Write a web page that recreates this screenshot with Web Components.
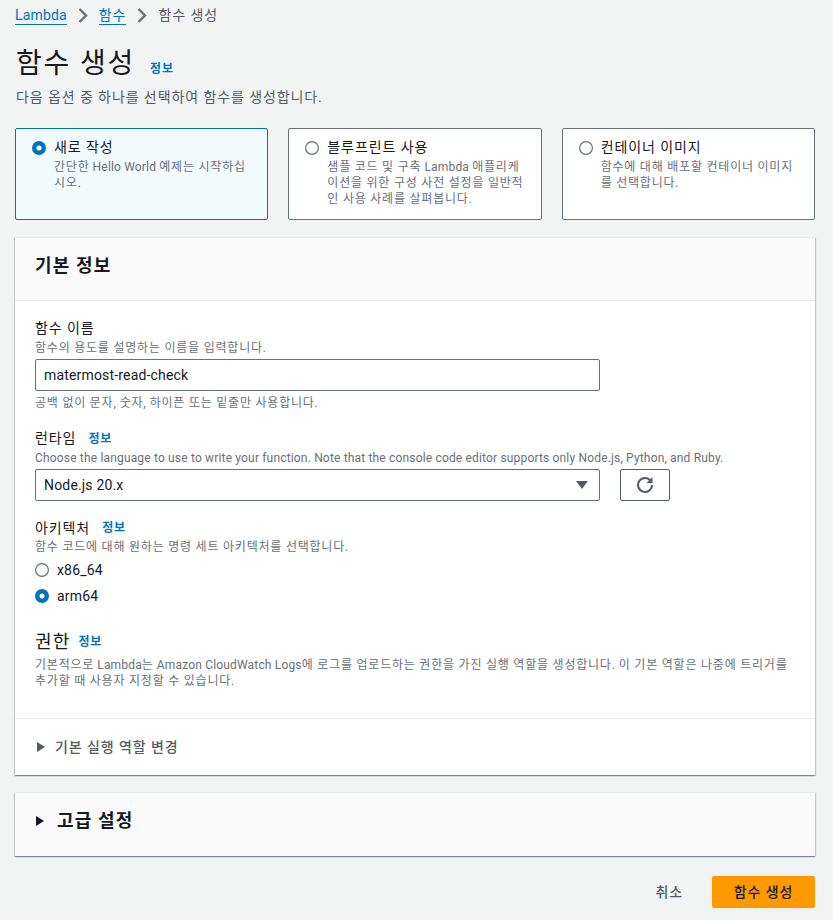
<!DOCTYPE html>
<html lang="ko"><head><meta charset="utf-8"><title>함수 생성</title>
<style>
html,body{margin:0;padding:0;background:#f2f3f3}
body{font:14px/20px Roboto,"Noto Sans CJK KR",sans-serif;color:#16191f;width:833px;height:920px;overflow:hidden;letter-spacing:.17px}
</style></head><body>
<lambda-page></lambda-page>
<script>
const FONT='Roboto,"Noto Sans CJK KR",sans-serif';
const HANGUL=/[\u3131-\uD7A3]+(?: +[\u3131-\uD7A3]+)*[.,]?/g;
function spaceHangul(root){
  const w=document.createTreeWalker(root,NodeFilter.SHOW_TEXT),nodes=[];
  while(w.nextNode()){const n=w.currentNode;if(n.parentNode.nodeName!=='STYLE'&&/[\u3131-\uD7A3]/.test(n.data))nodes.push(n);}
  for(const n of nodes){
    const f=document.createDocumentFragment();let i=0;
    for(const m of n.data.matchAll(HANGUL)){
      if(m.index>i)f.append(n.data.slice(i,m.index));
      const s=document.createElement('span');s.style.letterSpacing='.065em';s.textContent=m[0];f.append(s);
      i=m.index+m[0].length;
    }
    if(i<n.data.length)f.append(n.data.slice(i));
    n.replaceWith(f);
  }
}
function def(name,html){
  customElements.define(name,class extends HTMLElement{
    connectedCallback(){
      if(this.shadowRoot)return;
      const r=this.attachShadow({mode:'open'});
      r.innerHTML=typeof html==='function'?html(this):html;
      spaceHangul(r);
    }
  });
}
const CHEV='<svg width="10" height="15" viewBox="0 0 10 15"><path d="M1.5 1l6.5 6.5-6.5 6.5" fill="none" stroke="#687078" stroke-width="2.4"/></svg>';
def('info-link',`<style>:host{display:inline-block;font-size:12px;line-height:16px;font-weight:700;color:#0073bb}</style>정보`);
def('radio-dot',h=>`<style>:host{display:inline-block;width:14px;height:14px;flex:none}svg{display:block}</style>
<svg width="14" height="14" viewBox="0 0 14 14">${h.hasAttribute('checked')
?'<circle cx="7" cy="7" r="4.75" fill="#fff" stroke="#0073bb" stroke-width="4.5"/>'
:'<circle cx="7" cy="7" r="6.4" fill="#fff" stroke="#687078" stroke-width="1.2"/>'}</svg>`);
def('tile-option',h=>`<style>
:host{display:flex;flex:1 1 0;min-width:0;box-sizing:border-box;height:92px;border:1px solid ${h.hasAttribute('checked')?'#0073bb':'#687078'};background:${h.hasAttribute('checked')?'#f1faff':'#fff'};border-radius:2px;padding:8px 16px 0;gap:8px}
.t{font-size:14px;line-height:17px;color:#16191f;margin-top:2px}
.d{font-size:12px;line-height:16px;color:#687078;margin-top:3px}
</style><radio-dot ${h.hasAttribute('checked')?'checked':''} style="margin-top:4px"></radio-dot>
<div><div class="t">${h.getAttribute('label')}</div><div class="d"><slot></slot></div></div>`);
def('bread-crumbs',`<style>
:host{display:flex;align-items:center;height:30px;font-size:14px;color:#545b64}
a{color:#0073bb;border-bottom:1px solid #0073bb;line-height:18px;height:18px;display:block}
svg{display:block;margin:0 11px}
</style><a>Lambda</a>${CHEV}<a>함수</a>${CHEV}<span>함수 생성</span>`);
def('page-head',`<style>
:host{display:block;padding-left:1px}
.h{display:flex;align-items:baseline;gap:15px;margin-top:16px}
h1{margin:0;font-size:28px;line-height:36px;font-weight:400;color:#16191f}
p{margin:5px 0 0;font-size:14px;line-height:20px;color:#545b64}
</style><div class="h"><h1>함수 생성</h1><info-link></info-link></div><p>다음 옵션 중 하나를 선택하여 함수를 생성합니다.</p>`);
def('form-field',h=>`<style>
:host{display:block;margin-bottom:16px}
.l{font-size:14px;line-height:${h.getAttribute('lh')||20}px;color:#16191f;display:flex;align-items:center;gap:12px}
.d{font-size:12px;line-height:16px;color:#687078;margin-top:${h.getAttribute('dm')||0}px}
</style><div class="l"><span>${h.getAttribute('label')}</span><slot name="info"></slot></div>
<div class="d">${h.getAttribute('desc')}</div><slot></slot>`);
def('text-box',`<style>
:host{display:block;box-sizing:border-box;width:565px;height:32px;border:1px solid #687078;border-radius:2px;background:#fff;padding:0 8px;font-size:14px;line-height:30px;color:#16191f;margin-top:3px}
</style><slot></slot>`);
def('select-row',`<style>
:host{display:flex;gap:20px;margin-top:3px}
.s{box-sizing:border-box;width:565px;height:32px;border:1px solid #687078;border-radius:2px;background:#fff;padding:0 8px;font-size:14px;line-height:30px;color:#16191f;display:flex;justify-content:space-between;align-items:center}
.b{box-sizing:border-box;width:50px;height:32px;border:1px solid #545b64;border-radius:2px;background:#fff;display:flex;align-items:center;justify-content:center}
svg{display:block}
</style><div class="s"><span><slot></slot></span><svg style="margin-right:3px" width="12" height="8" viewBox="0 0 12 8"><path d="M0 0h12L6 8z" fill="#545b64"/></svg></div>
<div class="b"><svg width="18" height="18" viewBox="0 0 18 18"><path d="M14.5 4.6A7 7 0 1 0 16 9" fill="none" stroke="#545b64" stroke-width="2"/><path d="M16.5 1v6h-6z" fill="#545b64"/></svg></div>`);
def('radio-line',h=>`<style>
:host{display:flex;align-items:center;gap:8px;height:26px;font-size:14px;color:#16191f}
</style><radio-dot ${h.hasAttribute('checked')?'checked':''}></radio-dot><slot></slot>`);
def('caret-right',h=>`<style>:host{display:block;flex:none}svg{display:block}</style><svg width="8" height="10" viewBox="0 0 8 10"><path d="M0 0l8 5-8 5z" fill="${h.getAttribute('color')||'#545b64'}"/></svg>`);
def('basic-panel',`<style>
:host{display:block;background:#fff;box-shadow:0 1px 1px 0 rgba(0,28,36,.3),1px 1px 1px 0 rgba(0,28,36,.15),-1px 1px 1px 0 rgba(0,28,36,.15);border-top:1px solid #eaeded}
header{box-sizing:border-box;height:63px;background:#fafafa;border-bottom:1px solid #eaeded;padding:0 20px 6px;display:flex;align-items:center}
h2{margin:0;font-size:18px;line-height:22px;font-weight:700;color:#16191f}
.body{padding:17px 20px 0;height:417px;box-sizing:border-box}
.perm{display:flex;align-items:center;gap:8px;height:24px;font-size:18px;color:#16191f;margin-top:21px}
.pd{font-size:12px;line-height:16px;color:#687078;margin-top:3px;width:755px}
.hint{font-size:12px;line-height:16px;color:#687078;margin-top:4px}
footer{border-top:1px solid #eaeded;height:56px;padding:0 22px;display:flex;align-items:center;gap:10px;font-size:14px;font-weight:500;color:#545b64}
</style><header><h2>기본 정보</h2></header>
<div class="body">
<form-field dm="2" label="함수 이름" desc="함수의 용도를 설명하는 이름을 입력합니다."><text-box>matermost-read-check</text-box><div class="hint">공백 없이 문자, 숫자, 하이픈 또는 밑줄만 사용합니다.</div></form-field>
<form-field lh="23" label="런타임" desc="Choose the language to use to write your function. Note that the console code editor supports only Node.js, Python, and Ruby."><info-link slot="info"></info-link><select-row>Node.js 20.x</select-row></form-field>
<form-field lh="22" label="아키텍처" desc="함수 코드에 대해 원하는 명령 세트 아키텍처를 선택합니다." style="margin-bottom:0"><info-link slot="info"></info-link><div style="height:2px"></div><radio-line>x86_64</radio-line><radio-line checked>arm64</radio-line></form-field>
<div class="perm"><span>권한</span><info-link></info-link></div>
<div class="pd">기본적으로 Lambda는 Amazon CloudWatch Logs에 로그를 업로드하는 권한을 가진 실행 역할을 생성합니다. 이 기본 역할은 나중에 트리거를 추가할 때 사용자 지정할 수 있습니다.</div>
</div>
<footer><caret-right></caret-right><span>기본 실행 역할 변경</span></footer>`);
def('advanced-panel',`<style>
:host{display:flex;align-items:center;gap:13px;height:64px;box-sizing:border-box;padding:0 21px 8px;background:#fafafa;border-top:1px solid #eaeded;box-shadow:0 1px 1px 0 rgba(0,28,36,.3),1px 1px 1px 0 rgba(0,28,36,.15),-1px 1px 1px 0 rgba(0,28,36,.15);margin-top:17px;font-size:18px;font-weight:700;color:#16191f}
</style><caret-right color="#16191f"></caret-right><span>고급 설정</span>`);
def('action-bar',`<style>
:host{display:flex;justify-content:flex-end;align-items:center;gap:29px;margin-top:20px;font-size:14px}
.c{color:#545b64;font-weight:500}
.p{box-sizing:border-box;width:103px;height:32px;background:#ff9900;border-radius:2px;color:#16191f;font-weight:500;text-align:center;line-height:32px}
</style><span class="c">취소</span><span class="p">함수 생성</span>`);
def('lambda-page',`<style>
:host{display:block;padding:0 18px 0 15px;font-family:${FONT}}
.tiles{display:flex;gap:20px;margin-top:21px;margin-bottom:17px}
</style>
<bread-crumbs></bread-crumbs><page-head></page-head>
<div class="tiles">
<tile-option checked label="새로 작성">간단한 Hello World 예제는 시작하십시오.</tile-option>
<tile-option label="블루프린트 사용">샘플 코드 및 구축 Lambda 애플리케이션을 위한 구성 사전 설정을 일반적인 사용 사례를 살펴봅니다.</tile-option>
<tile-option label="컨테이너 이미지">함수에 대해 배포할 컨테이너 이미지를 선택합니다.</tile-option>
</div>
<basic-panel></basic-panel><advanced-panel></advanced-panel><action-bar></action-bar>`);
</script>
</body></html>
